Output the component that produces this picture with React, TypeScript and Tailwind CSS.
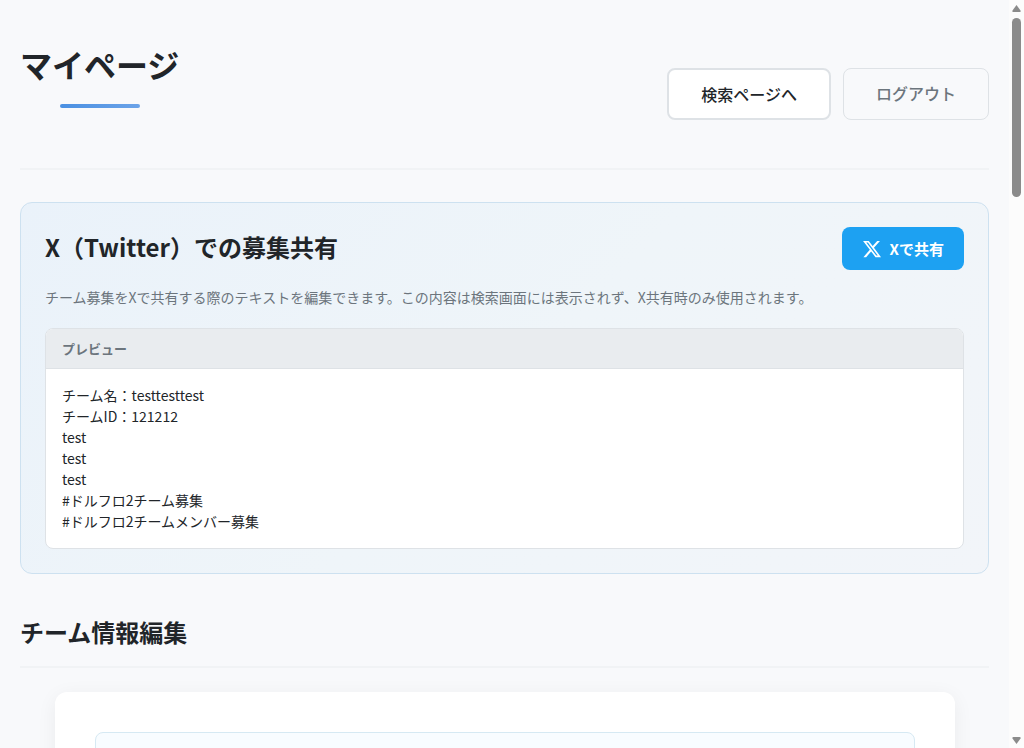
const previewText = `チーム名：testtesttest
チームID：121212
test
test
test
#ドルフロ2チーム募集
#ドルフロ2チームメンバー募集`

function XLogo() {
  return (
    <svg className="w-5 h-5" viewBox="0 0 24 24" fill="currentColor" aria-hidden="true">
      <path d="M18.244 2.25h3.308l-7.227 8.26 8.502 11.24H16.17l-5.214-6.817L4.99 21.75H1.68l7.73-8.835L1.254 2.25H8.08l4.713 6.231zm-1.161 17.52h1.833L7.084 4.126H5.117z" />
    </svg>
  )
}

function Header() {
  return (
    <header className="flex items-end justify-between pt-10 pb-12 border-b-2 border-[#f1f3f5]">
      <div className="self-start pb-3">
        <h1 className="text-[32px] leading-12 font-bold">マイページ</h1>
        <div className="mt-4 mx-auto w-20 h-1 rounded-sm bg-linear-to-r from-[#4a90e2] to-[#6ba3e8]" />
      </div>
      <div className="flex gap-3">
        <a href="#search" className="px-8 py-3 leading-6 font-medium bg-white border-2 border-[#dee2e6] rounded-lg">
          検索ページへ
        </a>
        <a href="#logout" className="px-8 py-3 leading-6 font-medium text-[#6c757d] border border-[#dee2e6] rounded-lg">
          ログアウト
        </a>
      </div>
    </header>
  )
}

function ShareCard() {
  return (
    <section className="mt-8 p-6 rounded-xl border border-[#cde1f0] bg-linear-135 from-[#eaf2fa] via-[#eff5f9] to-[#f2f5f9]">
      <div className="flex items-start justify-between">
        <h2 className="text-2xl leading-10 font-semibold">X（Twitter）での募集共有</h2>
        <button className="flex items-center gap-2 px-5 py-2.5 text-[15px] leading-[23px] font-semibold text-white bg-[#1da1f2] rounded-lg cursor-pointer">
          <XLogo />
          Xで共有
        </button>
      </div>
      <p className="mt-4 mb-5 text-sm leading-[22px] text-[#6c757d]">
        チーム募集をXで共有する際のテキストを編集できます。この内容は検索画面には表示されず、X共有時のみ使用されます。
      </p>
      <div className="bg-white border border-[#dee2e6] rounded-lg overflow-hidden">
        <h3 className="px-4 py-2.5 text-[13px] leading-[19px] font-semibold text-[#6c757d] bg-[#e9ecef] border-b border-[#dee2e6]">
          プレビュー
        </h3>
        <p className="p-4 text-sm leading-[21px] whitespace-pre-wrap">{previewText}</p>
      </div>
    </section>
  )
}

function TeamEdit() {
  return (
    <section className="mt-10">
      <h2 className="pb-4 text-2xl leading-9 font-semibold border-b-2 border-[#f1f3f5]">チーム情報編集</h2>
      <div className="mt-6 mx-auto max-w-[900px] p-10 bg-white rounded-xl shadow-[0_4px_20px_rgba(0,0,0,0.06)]">
        <div className="h-40 rounded-lg border border-[#d6e9f3] bg-[#f8fcff]" />
      </div>
    </section>
  )
}

function ScrollTrack() {
  return (
    <div className="flex flex-col items-center w-[15px] shrink-0 py-1 bg-[#fcfcfc]">
      <svg className="w-[9px] h-2 shrink-0" viewBox="0 0 9 8" fill="#8b8b8b" aria-hidden="true">
        <path d="M4.5 1 L8.5 6.5 Q9 8 7.5 8 H1.5 Q0 8 .5 6.5 Z" />
      </svg>
      <div className="mt-1.5 w-[9px] h-[179px] rounded-full bg-[#8b8b8b]" />
      <svg className="mt-auto w-[9px] h-2 shrink-0" viewBox="0 0 9 8" fill="#8b8b8b" aria-hidden="true">
        <path d="M4.5 8 L.5 2.5 Q0 1 1.5 1 H7.5 Q9 1 8.5 2.5 Z" />
      </svg>
    </div>
  )
}

export default function App() {
  return (
    <div className="flex h-screen bg-[#f8f9fb] text-[#212529] font-['Noto_Sans_CJK_JP',sans-serif]">
      <main className="flex-1 min-w-0 px-5 overflow-hidden">
        <Header />
        <ShareCard />
        <TeamEdit />
      </main>
      <ScrollTrack />
    </div>
  )
}
